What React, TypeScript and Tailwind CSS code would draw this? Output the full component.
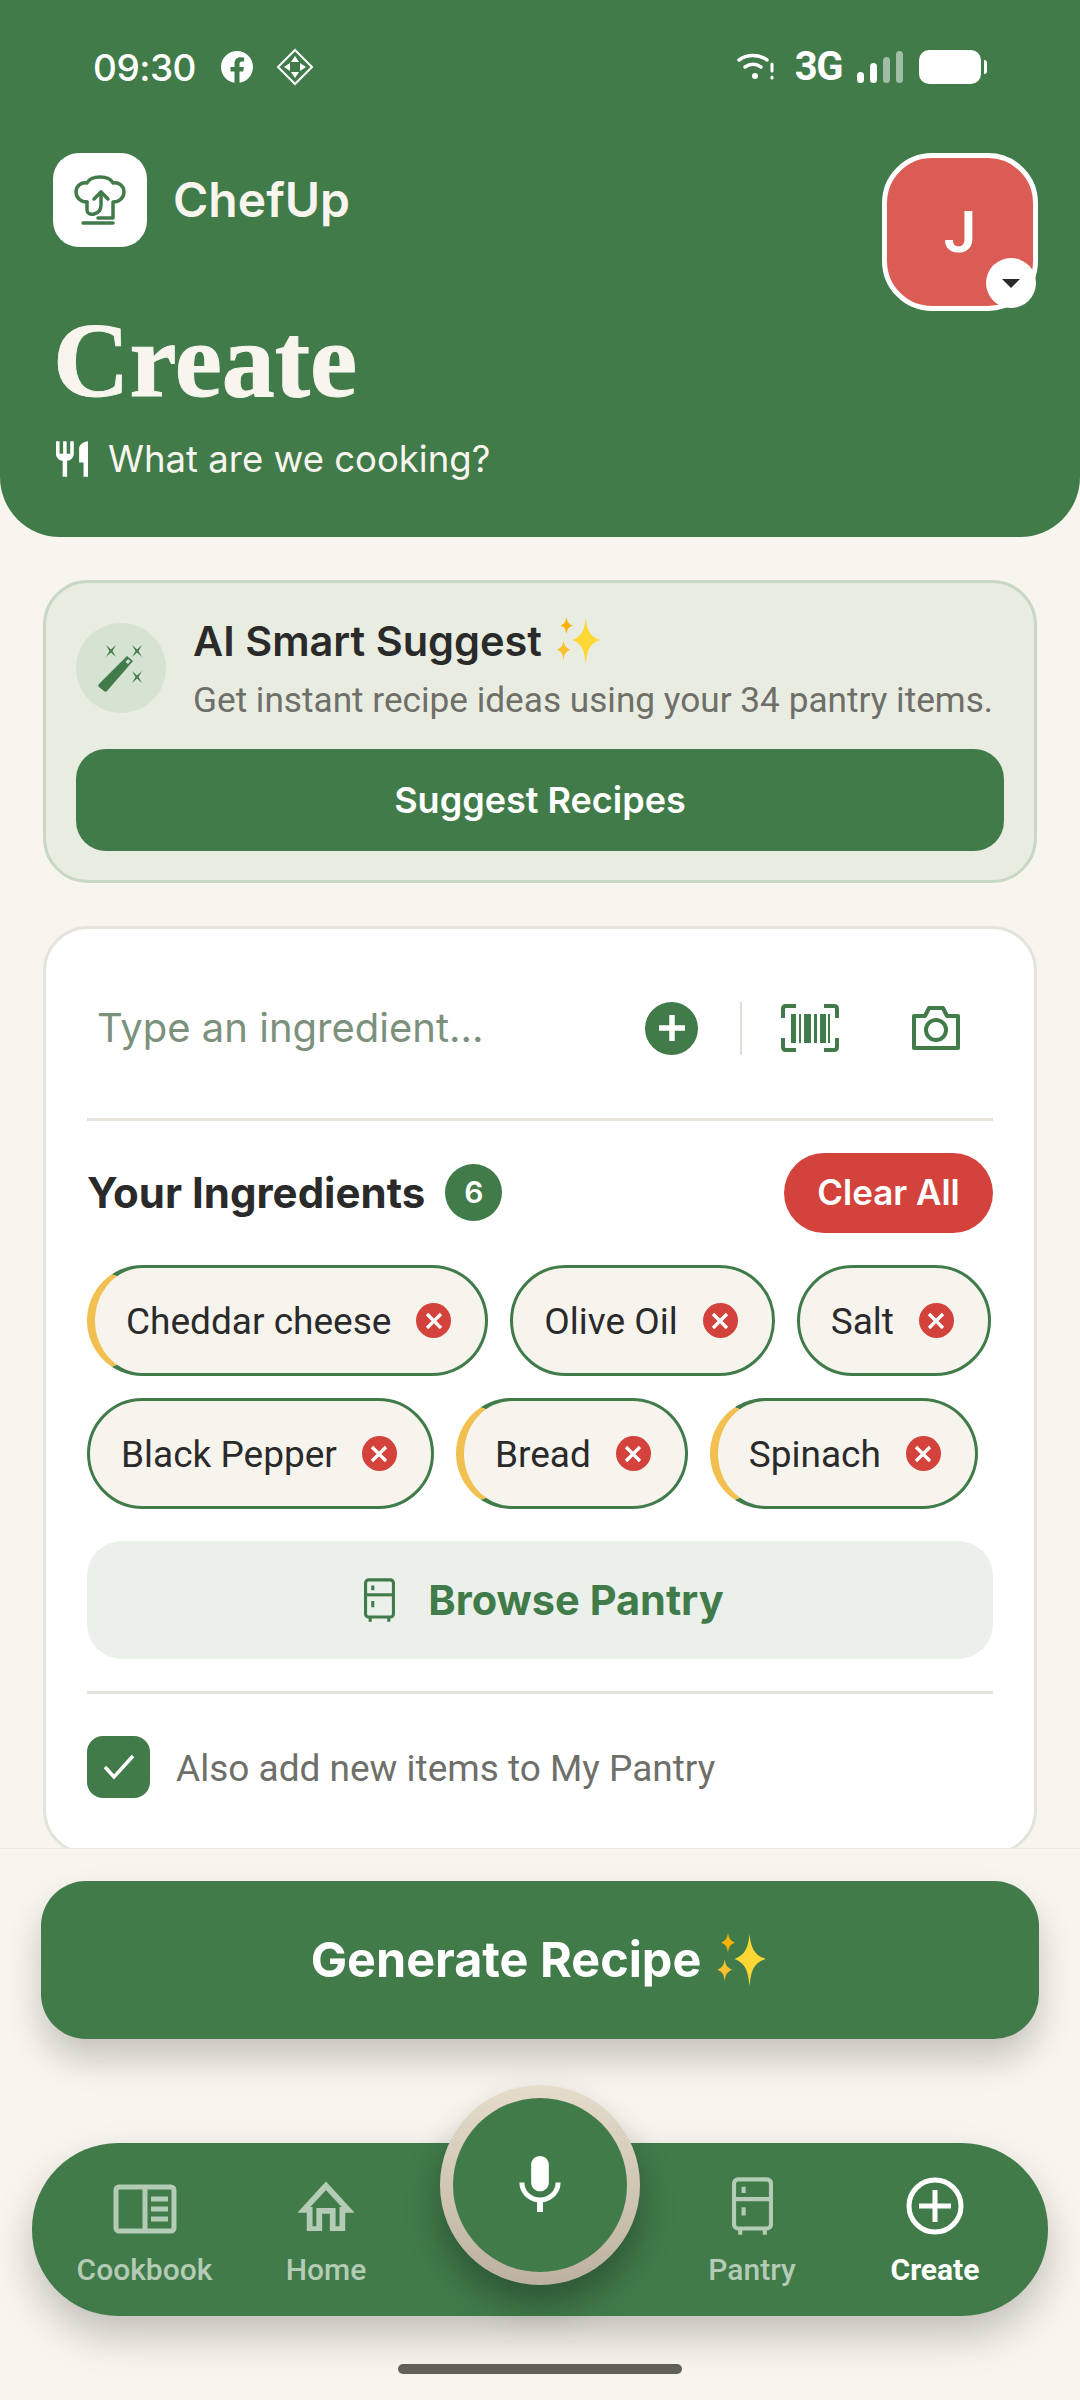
import React from 'react';

const GREEN = '#417B4A';

const chips = [
    [
        { name: 'Cheddar cheese', expiring: true },
        { name: 'Olive Oil', expiring: false },
        { name: 'Salt', expiring: false },
    ],
    [
        { name: 'Black Pepper', expiring: false },
        { name: 'Bread', expiring: true },
        { name: 'Spinach', expiring: true },
    ],
];

const Sparkles = ({ className }: { className: string }) => (
    <svg viewBox="0 0 48 52" className={className}>
        <path d="M31 2c1.5 13 4 19 15 23-11 4-13.500 10-15 25-1.500-15-4-21-14-25 10-4 12.500-10 14-23z" fill="#FDD835" />
        <path d="M11 1c.8 5 2 7 6.500 9-4.500 1.500-5.700 4-6.500 9-.8-5-2-7.500-6.500-9 4.500-2 5.700-4 6.500-9z" fill="#F9B208" />
        <path d="M8 25c.8 6 2.200 8 7 10-4.800 2-6.200 4-7 11-.8-7-2.200-9-7-11 4.800-2 6.200-4 7-10z" fill="#FBC02D" />
    </svg>
);

const FridgeIcon = ({ className }: { className: string }) => (
    <svg viewBox="0 0 30 42" className={className} fill="none" stroke="currentColor" strokeWidth="3">
        <rect x="1.500" y="1.500" width="27" height="36" rx="3" />
        <path d="M1.500 16h27" />
        <path d="M8.500 7v4.500M8.500 22v6" />
        <path d="M6 38v4M24 38v4" />
    </svg>
);

const Chip = ({ name, expiring }: { name: string; expiring: boolean }) => (
    <div
        className={
            expiring
                ? 'flex h-[111px] items-center rounded-[56px] border-[3px] border-l-[8px] border-[#417B4A] border-l-[#F1C050] bg-[#F7F4EE] pl-[31px] pr-[34px]'
                : 'flex h-[111px] items-center rounded-[56px] border-[3px] border-[#417B4A] bg-[#F7F4EE] pl-[31px] pr-[34px]'
        }
    >
        <span className="pt-[2px] text-[37px] text-[#2A2A2A]">{name}</span>
        <span className="ml-[25px] flex h-[35px] w-[35px] items-center justify-center rounded-full bg-[#D4433B]">
            <svg viewBox="0 0 20 20" className="h-[20px] w-[20px]" stroke="#fff" strokeWidth="3.200">
                <path d="M3 3l14 14M17 3L3 17" />
            </svg>
        </span>
    </div>
);

const StatusBar = () => (
    <div className="flex h-[60px] items-center justify-between pl-[93px] pr-[93px] text-white">
        <div className="flex items-center">
            <span className="font-['Inter',sans-serif] text-[37px] font-medium leading-none tracking-[-0.5px]">09:30</span>
            <svg viewBox="0 0 32 32" className="ml-[25px] h-[32px] w-[32px]">
                <path
                    fill="#fff"
                    d="M32 16C32 7.160 24.840 0 16 0S0 7.160 0 16c0 8 5.850 14.600 13.500 15.800V20.600H9.440V16h4.060v-3.500c0-4 2.400-6.200 6.040-6.200 1.750 0 3.580.3 3.580.3v3.930h-2.020c-2 0-2.600 1.240-2.600 2.500V16h4.430l-.7 4.600H18.500v11.200C26.150 30.600 32 24 32 16z"
                />
            </svg>
            <svg viewBox="0 0 38 38" className="ml-[23px] h-[38px] w-[38px]" fill="none" stroke="#fff" strokeWidth="2">
                <path d="M19 2l17 17-17 17L2 19z" />
                <path fill="#fff" stroke="none" d="M19 8l4 6h-8zM19 30l-4-6h8zM8 19l6-4v8zM30 19l-6 4v-8z" />
            </svg>
        </div>
        <div className="flex items-center">
            <svg viewBox="0 0 38 30" className="h-[30px] w-[38px]" fill="none" stroke="#fff" strokeWidth="3.500" strokeLinecap="round">
                <path d="M2 8c8-6 20-6 28 0" />
                <path d="M8 15c5-3.500 11-3.500 16 0" />
                <circle cx="18" cy="24" r="3" fill="#fff" stroke="none" />
                <path d="M35 12v7M35 25v1" strokeWidth="3" />
            </svg>
            <span className="ml-[20px] text-[40px] font-bold leading-none tracking-[-1.5px]">3G</span>
            <div className="ml-[15px] flex h-[32px] items-end gap-[6px]">
                <span className="h-[11px] w-[7px] rounded-full bg-white" />
                <span className="h-[20px] w-[7px] rounded-full bg-white" />
                <span className="h-[26px] w-[7px] rounded-full bg-white/50" />
                <span className="h-[32px] w-[7px] rounded-full bg-white/50" />
            </div>
            <div className="ml-[16px] h-[34px] w-[62px] rounded-[10px] bg-white" />
            <div className="ml-[3px] h-[14px] w-[3px] rounded-r-sm bg-white" />
        </div>
    </div>
);

const Header = () => (
    <header className="h-[537px] rounded-b-[60px] bg-[#417B4A] pt-[37px]">
        <StatusBar />
        <div className="flex justify-between pl-[53px] pr-[42px] pt-[56px]">
            <div>
                <div className="flex items-center">
                    <div className="flex h-[94px] w-[94px] items-center justify-center rounded-[26px] bg-white">
                        <svg viewBox="0 0 52 50" className="h-[50px] w-[52px]" fill="none" stroke={GREEN} strokeWidth="3.500" strokeLinecap="round" strokeLinejoin="round">
                            <path d="M13 27c-6 0-11-4-11-10 0-6 5-10 11-9 2-4 7-6 13-6s11 2 13 6c6-1 11 3 11 9 0 6-5 10-11 10v16H24" />
                            <path d="M13 27v8c0 3 3 5 7 4 4-1 7-4 7-9V17" />
                            <path d="M20 24l7-7 7 7" />
                            <path d="M9 48h30" />
                        </svg>
                    </div>
                    <span className="ml-[26px] font-['Inter',sans-serif] text-[48px] font-semibold leading-none text-[#F8F5EE]">ChefUp</span>
                </div>
                <h1 className="mt-[61px] font-['Liberation_Serif',serif] text-[106px] font-bold leading-none text-[#F8F5EE] [-webkit-text-stroke:1px_#F8F5EE]">Create</h1>
                <div className="mt-[27px] flex items-center">
                    <svg viewBox="3 2 18 20" className="ml-[3px] h-[36px] w-[32px]" fill="#fff">
                        <path d="M11 9H9V2H7v7H5V2H3v7c0 2.120 1.660 3.840 3.750 3.970V22h2.500v-9.030C11.340 12.840 13 11.120 13 9V2h-2v7zm5-3v8h2.500v8H21V2c-2.760 0-5 2.240-5 4z" />
                    </svg>
                    <span className="ml-[20px] font-['Inter',sans-serif] text-[36.500px] leading-none text-[#F8F5EE]">What are we cooking?</span>
                </div>
            </div>
            <div className="relative flex h-[158px] w-[156px] items-center justify-center rounded-[50px] border-[5px] border-white bg-[#DB5C55]">
                <span className="text-[58px] font-semibold text-white">J</span>
                <span className="absolute bottom-[-2px] right-[-3px] flex h-[50px] w-[50px] items-center justify-center rounded-full bg-white">
                    <span className="h-0 w-0 border-x-[9px] border-t-[9px] border-x-transparent border-t-[#2A2A2A]" />
                </span>
            </div>
        </div>
    </header>
);

const SuggestCard = () => (
    <section className="mx-[43px] mt-[43px] h-[303px] rounded-[45px] border-[3px] border-[#C9D8C4] bg-[#E9EDE1] px-[30px] pt-[33px]">
        <div className="flex items-center">
            <div className="flex h-[90px] w-[90px] shrink-0 items-center justify-center rounded-full bg-[#D6E2D2]">
                <svg viewBox="0 0 48 48" className="h-[48px] w-[48px]" fill={GREEN}>
                    <path d="M30 12l6 5L10 47c-1 1-2 1-3 0l-5-4c-1-1-1-2 0-3z" />
                    <path d="M31 15l2.500 2-2.500 3-2.500-2z" fill="#D6E2D2" />
                    <path d="M9 1l5 4.500L19 1l-3.500 6L19 13l-5-4.500L9 13l3.500-6zM35 1l5 4.500L45 1l-3.500 6L45 13l-5-4.500L35 13l3.500-6zM35 27l5 4.500 5-4.500-3.500 6 3.500 6-5-4.500-5 4.500 3.500-6z" />
                </svg>
            </div>
            <div className="ml-[27px]">
                <div className="flex items-center">
                    <span className="font-['Inter',sans-serif] text-[41.500px] font-semibold leading-[46px] text-[#2A2A2A]">AI Smart Suggest</span>
                    <Sparkles className="ml-[12px] h-[50px] w-[50px]" />
                </div>
                <div className="mt-[14px] whitespace-nowrap text-[35.200px] leading-[40px] text-[#6F6F6A]">Get instant recipe ideas using your 34 pantry items.</div>
            </div>
        </div>
        <button className="mt-[29px] h-[102px] w-full rounded-[30px] bg-[#417B4A] font-['Inter',sans-serif] text-[36px] font-semibold text-white">Suggest Recipes</button>
    </section>
);

const IngredientCard = () => (
    <section className="mx-[43px] mt-[43px] rounded-[45px] border-[3px] border-[#E5E3DC] bg-white px-[41px] pb-[54px]">
        <div className="flex h-[192px] items-center border-b-[3px] border-[#E5E3DC] pt-[9px]">
            <span className="ml-[10px] flex-1 font-['Inter',sans-serif] text-[40px] text-[#7C917C]">Type an ingredient...</span>
            <span className="flex h-[53px] w-[53px] items-center justify-center rounded-full bg-[#417B4A]">
                <svg viewBox="0 0 28 28" className="h-[28px] w-[28px]" stroke="#fff" strokeWidth="5.500">
                    <path d="M14 1v26M1 14h26" />
                </svg>
            </span>
            <span className="ml-[42px] h-[53px] w-[2px] bg-[#E0DFD6]" />
            <svg viewBox="0 0 58 48" className="ml-[39px] h-[48px] w-[58px]" fill="none" stroke={GREEN} strokeWidth="4">
                <path d="M2 14V5q0-3 3-3h10M43 2h10q3 0 3 3v9M2 34v9q0 3 3 3h10M43 46h10q3 0 3-3v-9" />
                <path fill={GREEN} stroke="none" d="M10 10h5v29h-5zM18 10h2v29h-2zM23 10h7v29h-7zM33 10h3v29h-3zM39 10h6v29h-6zM47 10h2v29h-2z" />
            </svg>
            <svg viewBox="0 0 48 44" className="ml-[73px] mr-[33px] h-[44px] w-[48px]" fill="none" stroke={GREEN} strokeWidth="4" strokeLinejoin="round">
                <path d="M2 10h11l4-8h14l4 8h11v32H2z" />
                <circle cx="24" cy="24" r="10" />
            </svg>
        </div>

        <div className="mt-[37px] flex h-[69px] items-center">
            <span className="font-['Inter',sans-serif] text-[42px] font-bold text-[#2A2A2A]">Your Ingredients</span>
            <span className="ml-[20px] flex h-[57px] w-[57px] items-center justify-center rounded-full bg-[#417B4A] font-['Inter',sans-serif] text-[30px] font-semibold text-white">6</span>
            <button className="ml-auto h-[80px] w-[209px] rounded-full bg-[#D4433B] font-['Inter',sans-serif] text-[35px] font-semibold text-white">Clear All</button>
        </div>

        <div className="mt-[38px] flex flex-col gap-[22px]">
            {chips.map((row, index) => (
                <div key={index} className="flex gap-[22px]">
                    {row.map((chip) => (
                        <Chip key={chip.name} name={chip.name} expiring={chip.expiring} />
                    ))}
                </div>
            ))}
        </div>

        <button className="mt-[32px] flex h-[118px] w-full items-center justify-center gap-[33px] rounded-[35px] bg-[#EBF1EA] pl-[8px] text-[#417B4A]">
            <FridgeIcon className="h-[44px] w-[31px]" />
            <span className="font-['Inter',sans-serif] text-[41.500px] font-bold">Browse Pantry</span>
        </button>

        <div className="mt-[32px] h-[3px] bg-[#E5E3DC]" />

        <div className="mt-[42px] flex items-center">
            <span className="flex h-[62px] w-[63px] items-center justify-center rounded-[16px] bg-[#417B4A]">
                <svg viewBox="0 0 32 26" className="h-[26px] w-[32px]" fill="none" stroke="#fff" strokeWidth="3.500">
                    <path d="M2 13l9 10L30 2" />
                </svg>
            </span>
            <span className="ml-[26px] pt-[3px] text-[37px] text-[#6F6F6A]">Also add new items to My Pantry</span>
        </div>
    </section>
);

const navLabel = "mt-[17px] text-[30px] font-medium leading-[36px] text-[#B4CBB5]";

const BottomNav = () => (
    <nav className="relative mx-[32px] mt-[104px] flex h-[173px] items-start rounded-[86px] bg-[#417B4A] pt-[34px] shadow-[0_20px_40px_rgba(0,0,0,0.22)]">
        <div className="ml-[50px] flex w-[125px] flex-col items-center">
            <svg viewBox="0 0 64 50" className="mb-[1px] mt-[7px] h-[50px] w-[64px]" fill="none" stroke="#B4CBB5" strokeWidth="5">
                <rect x="3" y="3" width="58" height="44" rx="3" />
                <path d="M32 3v44" />
                <path d="M38 15h17M38 25h17M38 35h17" />
            </svg>
            <span className={navLabel}>Cookbook</span>
        </div>
        <div className="ml-[79px] flex w-[80px] flex-col items-center">
            <svg viewBox="0 0 58 52" className="mb-[4px] mt-[4px] h-[50px] w-[56px]" fill="none" stroke="#B4CBB5" strokeWidth="6">
                <path d="M29 5L6 30h6v20h10V31h14v19h10V30h6z" />
            </svg>
            <span className={navLabel}>Home</span>
        </div>
        <div className="absolute left-[408px] top-[-58px] flex h-[200px] w-[200px] items-center justify-center rounded-full bg-gradient-to-b from-[#E6DCCB] to-[#BDB2A0] shadow-[0_20px_35px_rgba(0,0,0,0.3)]">
            <div className="flex h-[174px] w-[174px] items-center justify-center rounded-full bg-[#417B4A] pb-[2px]">
                <svg viewBox="5 2 14 19" className="h-[56px] w-[42px]" fill="#fff">
                    <path d="M12 14c1.660 0 3-1.340 3-3V5c0-1.660-1.340-3-3-3S9 3.340 9 5v6c0 1.660 1.340 3 3 3zm5.300-3c0 3-2.540 5.100-5.300 5.100S6.700 14 6.700 11H5c0 3.410 2.720 6.230 6 6.720V21h2v-3.280c3.280-.48 6-3.300 6-6.720h-1.700z" />
                </svg>
            </div>
        </div>
        <div className="ml-[342px] flex w-[88px] flex-col items-center text-[#B4CBB5]">
            <FridgeIcon className="h-[58px] w-[41px]" />
            <span className={navLabel}>Pantry</span>
        </div>
        <div className="ml-[95px] flex w-[88px] flex-col items-center">
            <svg viewBox="0 0 58 58" className="h-[58px] w-[58px]" fill="none" stroke="#fff" strokeWidth="5">
                <circle cx="29" cy="29" r="26" />
                <path d="M29 13v32M13 29h32" />
            </svg>
            <span className="mt-[17px] text-[30px] font-bold leading-[36px] text-white">Create</span>
        </div>
    </nav>
);

export default function App() {
    return (
        <div className="flex h-[2400px] w-[1080px] flex-col overflow-hidden bg-[#F8F5EE] font-['Roboto',sans-serif]">
            <Header />
            <main className="h-[1311px] shrink-0 overflow-hidden">
                <SuggestCard />
                <IngredientCard />
            </main>
            <footer className="flex-1 border-t border-[#ECE9E1] pt-[32px]">
                <button className="mx-[41px] flex h-[158px] w-[998px] items-center justify-center gap-[14px] rounded-[45px] bg-[#417B4A] shadow-[0_20px_35px_rgba(0,0,0,0.2)]">
                    <span className="font-['Inter',sans-serif] text-[48.500px] font-bold text-white">Generate Recipe</span>
                    <Sparkles className="h-[56px] w-[54px]" />
                </button>
                <BottomNav />
                <div className="mx-auto mt-[48px] h-[10px] w-[284px] rounded-full bg-[#62615B]" />
            </footer>
        </div>
    );
}
